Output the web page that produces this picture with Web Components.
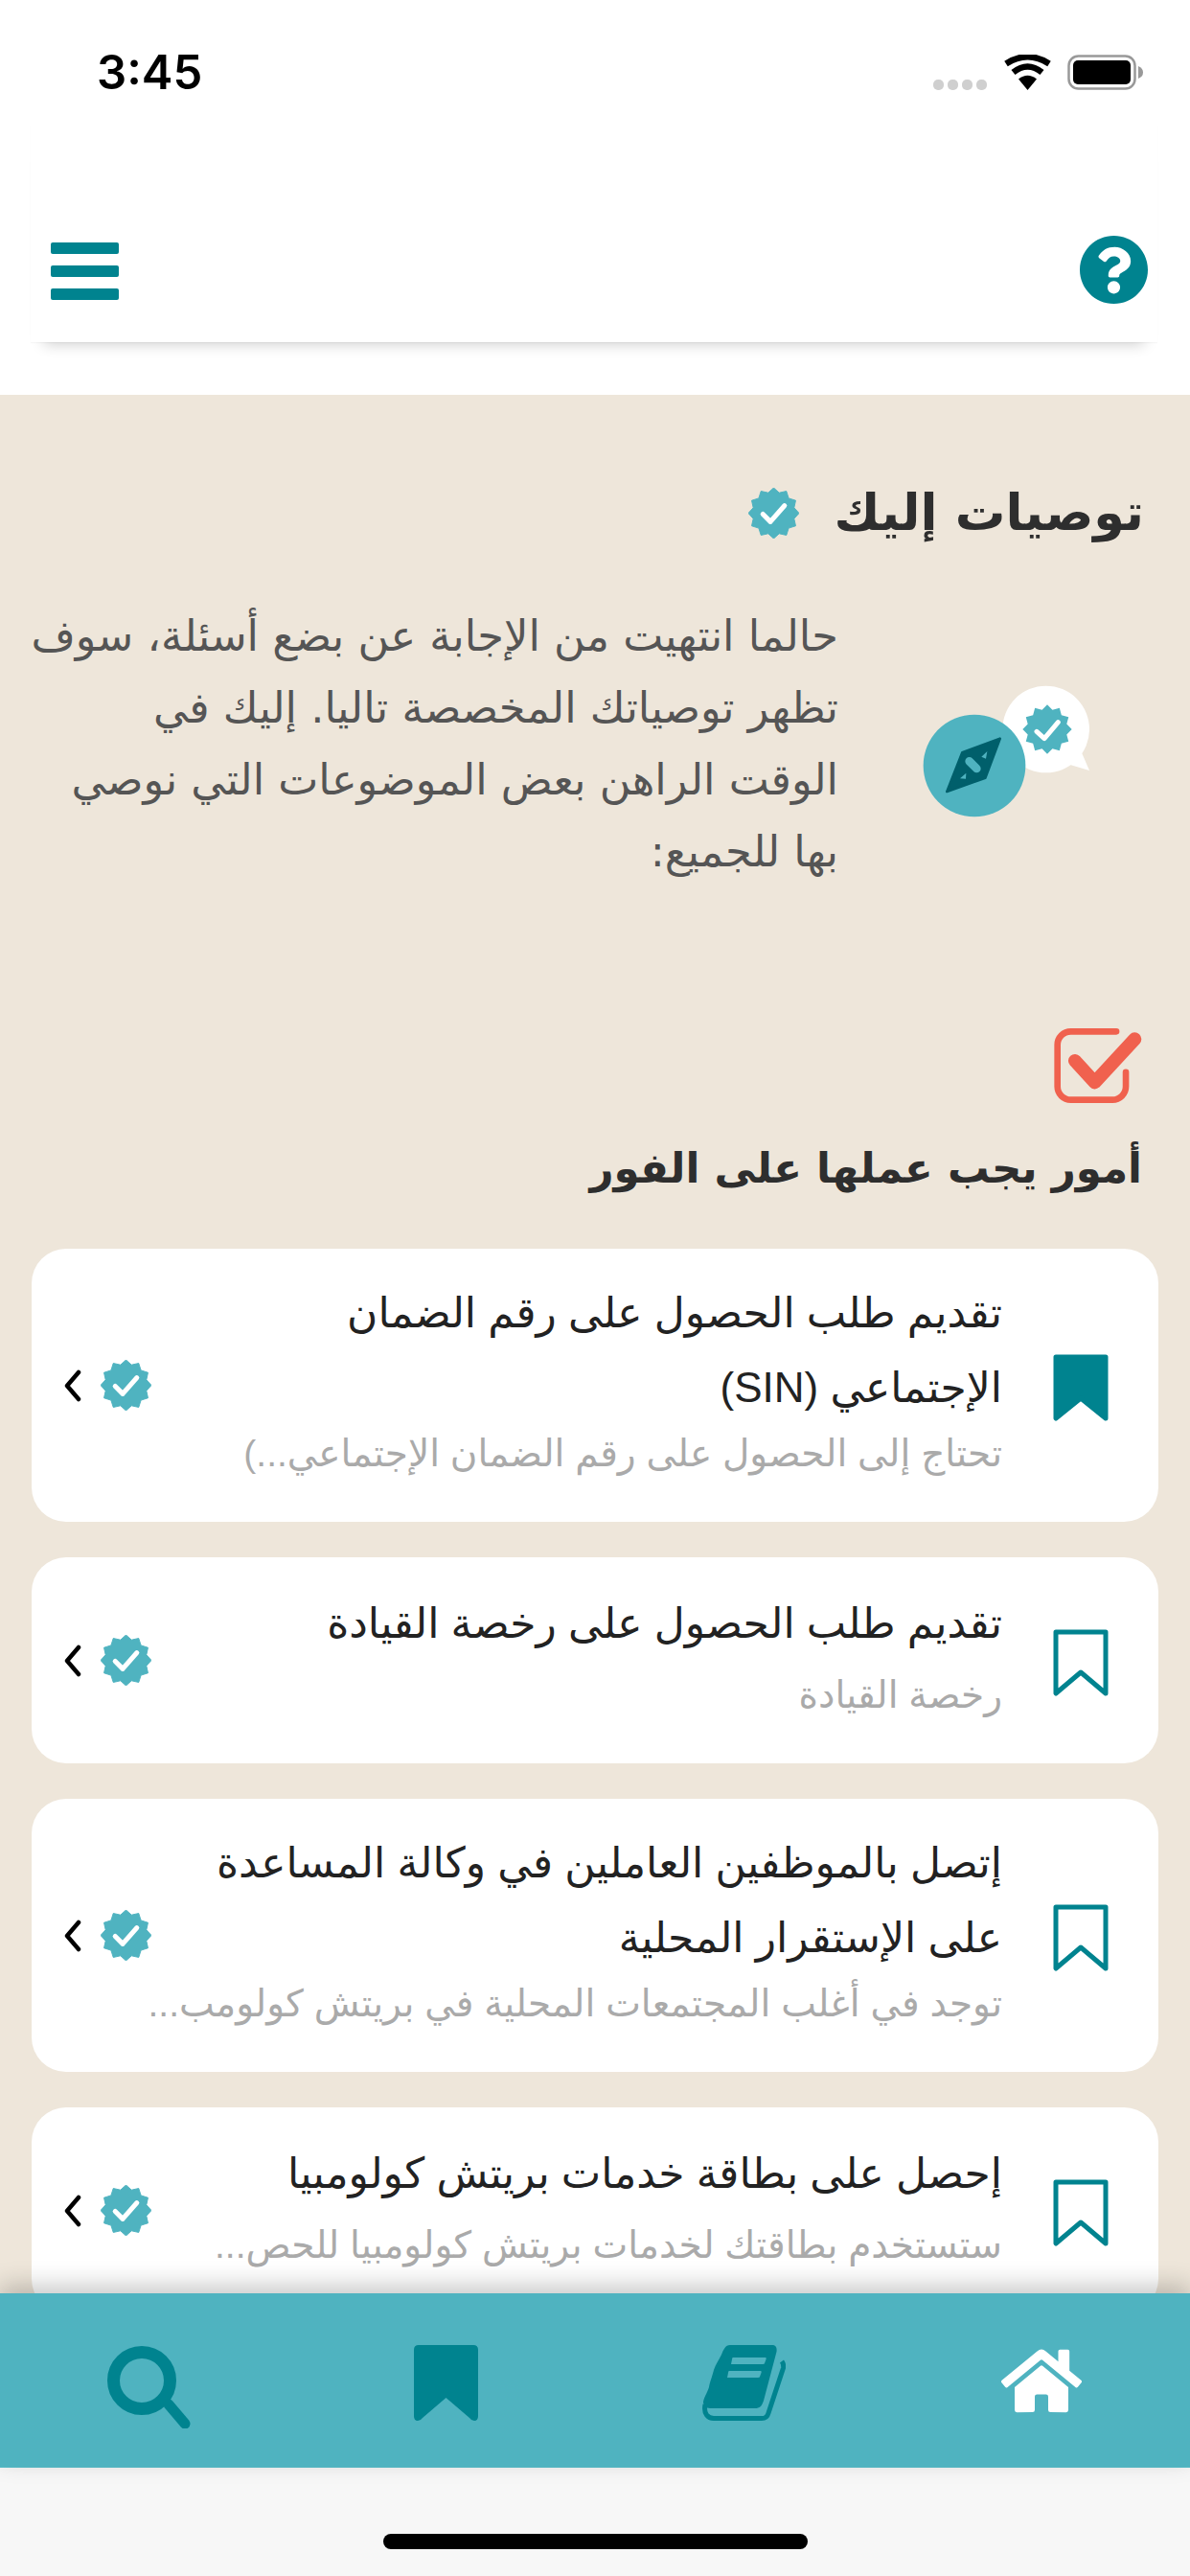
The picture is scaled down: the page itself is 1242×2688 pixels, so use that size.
<!DOCTYPE html>
<html lang="ar">

<head>
    <meta charset="UTF-8">
    <title>توصيات إليك</title>
    <style>
        * { box-sizing: border-box; }
        html, body { margin: 0; padding: 0; }
        body { width: 1242px; height: 2688px; overflow: hidden; font-family: "Liberation Sans", "DejaVu Sans", sans-serif; }
    </style>
</head>

<body>
    <app-shell>
        <status-bar slot="top"></status-bar>
        <app-header slot="top"></app-header>

        <rec-heading>توصيات إليك</rec-heading>
        <rec-intro>حالما انتهيت من الإجابة عن بضع أسئلة، سوف<br>تظهر توصياتك المخصصة تاليا. إليك في<br>الوقت الراهن بعض الموضوعات التي نوصي<br>بها للجميع:</rec-intro>
        <section-title>أمور يجب عملها على الفور</section-title>

        <task-list>
            <task-card saved lines="2">
                <span slot="title">تقديم طلب الحصول على رقم الضمان<br>الإجتماعي (SIN)</span>
                <span slot="sub">تحتاج إلى الحصول على رقم الضمان الإجتماعي...)</span>
            </task-card>
            <task-card>
                <span slot="title">تقديم طلب الحصول على رخصة القيادة</span>
                <span slot="sub">رخصة القيادة</span>
            </task-card>
            <task-card lines="2">
                <span slot="title">إتصل بالموظفين العاملين في وكالة المساعدة<br>على الإستقرار المحلية</span>
                <span slot="sub">توجد في أغلب المجتمعات المحلية في بريتش كولومب...</span>
            </task-card>
            <task-card>
                <span slot="title">إحصل على بطاقة خدمات بريتش كولومبيا</span>
                <span slot="sub">ستستخدم بطاقتك لخدمات بريتش كولومبيا للحص...</span>
            </task-card>
        </task-list>

        <tab-bar slot="bottom"></tab-bar>
    </app-shell>

    <script>
        const TEAL = '#00838f';
        const AQUA = '#4fb3c0';

        // 12 point star used by every "verified" badge
        function starPoints(cx, cy, outer, inner) {
            let pts = [];
            for (let i = 0; i < 24; i++) {
                let r = i % 2 ? inner : outer;
                let a = Math.PI * i / 12 - Math.PI / 2;
                pts.push((cx + r * Math.cos(a)).toFixed(1) + ',' + (cy + r * Math.sin(a)).toFixed(1));
            }
            return pts.join(' ');
        }

        function base(name, css, html) {
            customElements.define(name, class extends HTMLElement {
                constructor() {
                    super();
                    this.attachShadow({ mode: 'open' }).innerHTML = `<style>${css}</style>${html}`;
                }
            });
        }

        base('verified-badge', `
            :host { display: block; width: 53px; height: 53px; flex: none; }
            svg { display: block; width: 100%; height: 100%; }
        `, `<svg viewBox="0 0 54 54">
                <polygon points="${starPoints(27, 27, 27, 22.5)}" fill="${AQUA}" stroke="${AQUA}" stroke-width="1" stroke-linejoin="round"/>
                <path d="M15.5 28 L23.5 36 L38.5 19" fill="none" stroke="#fff" stroke-width="5.2" stroke-linejoin="round" stroke-linecap="round"/>
            </svg>`);

        base('app-shell', `
            :host { display: flex; flex-direction: column; width: 1242px; height: 2688px; background: #f7f7f7; overflow: hidden; }
            .top { flex: none; height: 412px; background: #fff; }
            .scroll { flex: 1; min-height: 0; overflow: hidden; background: #eee6da; direction: rtl; }
            .bottom { flex: none; height: 295px; position: relative; z-index: 2; }
        `, `<div class="top"><slot name="top"></slot></div>
            <div class="scroll"><slot></slot></div>
            <div class="bottom"><slot name="bottom"></slot></div>`);

        base('status-bar', `
            :host { display: flex; align-items: flex-start; justify-content: space-between; height: 130px; padding: 50px 48px 0 101px; }
            .time { font: 600 49px/52px "Inter", sans-serif; color: #000; }
            .icons { display: flex; align-items: flex-end; margin-top: 7px; }
            .dots { display: flex; gap: 4px; margin-right: 17px; }
            .dots i { width: 11px; height: 11px; border-radius: 5px; background: #cfcfcf; }
            svg { display: block; }
        `, `<div class="time">3:45</div>
            <div class="icons">
                <div class="dots"><i></i><i></i><i></i><i></i></div>
                <svg width="51" height="37" viewBox="0 0 51 37" style="margin-right:16px">
                    <path d="M25.5 37 L16 25.5 Q25.5 18 35 25.5 Z" fill="#000"/>
                    <path d="M10.5 18.5 Q25.5 6.5 40.5 18.5" fill="none" stroke="#000" stroke-width="6.5"/>
                    <path d="M3 9.5 Q25.5 -5 48 9.5" fill="none" stroke="#000" stroke-width="6.5"/>
                </svg>
                <svg width="80" height="37" viewBox="0 0 80 37">
                    <rect x="1.5" y="1.5" width="69" height="34" rx="10" fill="#fff" stroke="#999" stroke-width="2.5"/>
                    <rect x="6" y="6" width="60" height="25" rx="5" fill="#000"/>
                    <path d="M74 12 Q79 14 79 18.5 Q79 23 74 25 Z" fill="#999"/>
                </svg>
            </div>`);

        base('app-header', `
            :host { display: flex; align-items: flex-end; justify-content: space-between; height: 227px; margin: 0 34px 0 32px; padding: 0 10px 40px 21px;
                background: #fff; box-shadow: 0 16px 14px -14px rgba(0,0,0,.2), 0 1px 1px rgba(0,0,0,.03); }
            .menu { display: flex; flex-direction: column; gap: 12px; width: 71px; margin-bottom: 4px; }
            .menu i { display: block; height: 12px; border-radius: 2px; background: ${TEAL}; }
            svg { display: block; }
        `, `<div class="menu"><i></i><i></i><i></i></div>
            <svg width="71" height="71" viewBox="8 8 496 496"><path fill="${TEAL}" d="M504 256c0 136.997-111.043 248-248 248S8 392.997 8 256C8 119.083 119.043 8 256 8s248 111.083 248 248zM262.655 90c-54.497 0-89.255 22.957-116.549 63.758-3.536 5.286-2.353 12.415 2.715 16.258l34.699 26.31c5.205 3.947 12.621 3.008 16.665-2.122 17.864-22.658 30.113-35.797 57.303-35.797 20.429 0 45.698 13.148 45.698 32.958 0 14.976-12.363 22.667-32.534 33.976C247.128 238.528 216 254.941 216 296v4c0 6.627 5.373 12 12 12h56c6.627 0 12-5.373 12-12v-1.333c0-28.462 83.186-29.647 83.186-106.667 0-58.002-60.165-102-116.531-102zM256 338c-25.365 0-46 20.635-46 46 0 25.364 20.635 46 46 46s46-20.636 46-46c0-25.365-20.635-46-46-46z"/></svg>`);

        base('rec-heading', `
            :host { display: flex; align-items: center; gap: 36px; padding: 88px 48px 0 0; height: 158px;
                font: 700 52.5px/70px "DejaVu Sans", sans-serif; color: #2e2e2e; white-space: nowrap; }
        `, `<slot></slot><verified-badge></verified-badge>`);

        base('rec-intro', `
            :host { display: flex; align-items: flex-start; margin-top: 57px; padding: 0 61px 0 32px; }
            .art { flex: none; width: 260px; height: 200px; margin: 53px 0 0 46px; display: block; }
            .copy { flex: 1; font: 400 44.7px/75px "DejaVu Sans", sans-serif; color: #555; white-space: nowrap; }
        `, `<svg class="art" viewBox="0 0 780 600">
                <circle cx="512" cy="243" r="136" fill="#fff"/>
                <path d="M622 312 L648 372 L585 353 Z" fill="#fff"/>
                <polygon points="${starPoints(516, 243, 77, 63)}" fill="${AQUA}"/>
                <path d="M483 250 L507 272 L550 221" fill="none" stroke="#fff" stroke-width="15" stroke-linecap="round" stroke-linejoin="round"/>
                <circle cx="288" cy="357" r="160" fill="${AQUA}"/>
                <path fill="#005f6b" stroke="#005f6b" stroke-width="8" stroke-linejoin="round" d="M368 272 L250 316 L202 438 L322 395 Z"/>
                <path fill="${AQUA}" d="M328 312 L310 329 L324 335 Z M262 380 L243 397 L261 398 Z"/>
                <path d="M272 343 L295 366" stroke="${AQUA}" stroke-width="26" stroke-linecap="round"/>
            </svg>
            <div class="copy"><slot></slot></div>`);

        base('section-title', `
            :host { display: block; margin-top: 146px; padding-right: 50px; font: 700 43.5px/70px "DejaVu Sans", sans-serif; color: #2e2e2e; white-space: nowrap; }
            svg { display: block; width: 92px; height: 78px; margin-bottom: 33px; }
        `, `<svg viewBox="505 70 275 235">
                <path d="M700 80 H557 a42 42 0 0 0 -42 42 V253 a42 42 0 0 0 42 42 H688 a42 42 0 0 0 42 -42 V208" fill="none" stroke="#f0614e" stroke-width="20" stroke-linecap="round"/>
                <path d="M570 172 L632 240 L758 104" fill="none" stroke="#f0614e" stroke-width="42" stroke-linejoin="round" stroke-linecap="round"/>
            </svg><slot></slot>`);

        base('task-list', `
            :host { display: flex; flex-direction: column; gap: 37px; margin: 49px 33px 0; }
        `, `<slot></slot>`);

        customElements.define('task-card', class extends HTMLElement {
            constructor() {
                super();
                const saved = this.hasAttribute('saved');
                const fill = saved ? TEAL : 'none';
                this.attachShadow({ mode: 'open' }).innerHTML = `<style>
                    :host { display: flex; align-items: center; background: #fff; border-radius: 36px; padding: 0 52px 0 33px; flex: none; }
                    .mark { flex: none; width: 58px; height: 70px; margin: 4px 0 0 53px; display: block; }
                    .text { flex: 1; min-width: 0; white-space: nowrap; padding: 30px 0 41px; }
                    :host([lines="2"]) .text { padding: 28px 0 41px; }
                    .title { font: 400 44px/78px "Liberation Sans", "DejaVu Sans", sans-serif; color: #222; }
                    .sub { font: 400 39px/60px "Liberation Sans", "DejaVu Sans", sans-serif; color: #aaa; margin-top: 6px; }
                    :host([lines="2"]) .sub { margin-top: 0; }
                    .end { flex: none; display: flex; align-items: center; gap: 20px; }
                    .chev { display: block; width: 19px; height: 34px; }
                </style>
                <svg class="mark" viewBox="0 0 58 70"><path d="M3 3 H55 V67 L29 ${saved ? 46 : 45} L3 67 Z" fill="${fill}" stroke="${TEAL}" stroke-width="5" stroke-linejoin="round"/></svg>
                <div class="text">
                    <div class="title"><slot name="title"></slot></div>
                    <div class="sub"><slot name="sub"></slot></div>
                </div>
                <div class="end">
                    <verified-badge></verified-badge>
                    <svg class="chev" viewBox="0 0 19 34"><path d="M16 3 L4 17 L16 31" fill="none" stroke="#000" stroke-width="4.5" stroke-linecap="round" stroke-linejoin="round"/></svg>
                </div>`;
            }
        });

        base('tab-bar', `
            :host { display: block; height: 295px; background: #f7f7f7; position: relative; }
            .bar { display: grid; grid-template-columns: repeat(4, 1fr); height: 181px; background: ${AQUA}; box-shadow: 0 -8px 24px rgba(0,0,0,.22), 0 1px 0 #58c0cc; position: relative; }
            .cell { display: flex; justify-content: center; align-items: flex-start; padding-top: 54px; }
            .pill { width: 443px; height: 16px; border-radius: 8px; background: #000; margin: 70px auto 0; }
            svg { display: block; }
        `, `<div class="bar">
                <div class="cell"><svg width="87" height="87" viewBox="0 0 87 87">
                    <circle cx="36" cy="37" r="29.5" fill="none" stroke="${TEAL}" stroke-width="13"/>
                    <path d="M64 62 L81 82" stroke="${TEAL}" stroke-width="11" stroke-linecap="round"/>
                </svg></div>
                <div class="cell"><svg width="67" height="79" viewBox="0 0 67 79">
                    <path fill="${TEAL}" d="M5 0 H62 Q67 0 67 5 V74 Q67 79 63 79 Q60 79 58 76 L33.5 55 L9 76 Q7 79 4 79 Q0 79 0 74 V5 Q0 0 5 0 Z"/>
                </svg></div>
                <div class="cell"><svg width="87" height="80" viewBox="0 0 87 80">
                    <path fill="none" stroke="${TEAL}" stroke-width="5" d="M3 62 C1 72 6 76.5 12 76.5 H62 C66 76.5 68 75 69 71 L84.5 24 C85 21 84.5 19 83 17"/>
                    <path fill="${TEAL}" d="M29 0 H73 C77 0 78 3 77.5 7 L64 58 C62 64 60 66 55 66 H10 C5 66 2 65 1 60 C1 56 5 50 7 44 C8 38 10 34 12 26 C14 20 17 16 20 10 C22 5 24 0 29 0 Z"/>
                    <path fill="${AQUA}" d="M32 13 H66 Q67 13 66.5 15 L65 19 Q65 20 63 20 H30 L31 15 Q31 13 32 13 Z M28 27 H61 Q62 27 61.5 29 L60 33 Q60 34 58 34 H26 L27 29 Q27 27 28 27 Z"/>
                </svg></div>
                <div class="cell"><svg width="84" height="75" viewBox="0 0 576 512">
                    <path fill="#fff" d="M280.37 148.26L96 300.11V464a16 16 0 0 0 16 16l112.06-.29a16 16 0 0 0 15.92-16V368a16 16 0 0 1 16-16h64a16 16 0 0 1 16 16v95.64a16 16 0 0 0 16 16.05L464 480a16 16 0 0 0 16-16V300L295.67 148.26a12.19 12.19 0 0 0-15.3 0zM571.6 251.47L488 182.56V44.05a12 12 0 0 0-12-12h-56a12 12 0 0 0-12 12v72.61L318.47 43a48 48 0 0 0-61 0L4.34 251.47a12 12 0 0 0-1.6 16.9l25.5 31A12 12 0 0 0 45.15 301l235.22-193.74a12.19 12.19 0 0 1 15.3 0L530.9 301a12 12 0 0 0 16.9-1.6l25.5-31a12 12 0 0 0-1.7-16.93z"/>
                </svg></div>
            </div>
            <div class="pill"></div>`);
    </script>
</body>

</html>
